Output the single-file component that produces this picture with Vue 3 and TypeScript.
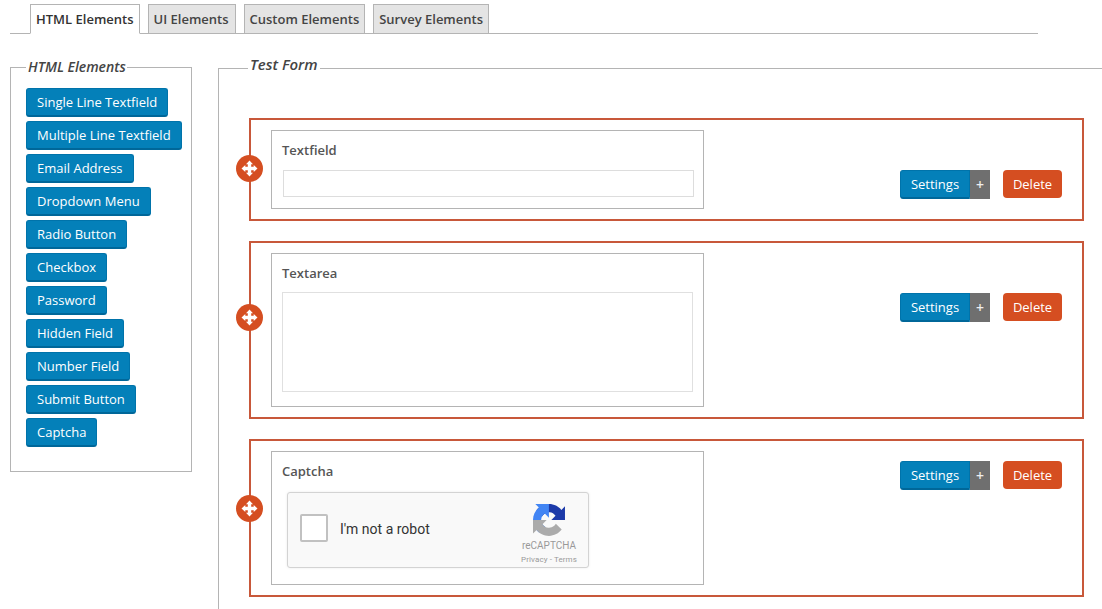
<template>
  <div class="page">
    <div class="tabs">
      <button
        v-for="(tab, i) in tabs"
        :key="tab"
        class="tab"
        :class="{ active: i === 0 }"
      >{{ tab }}</button>
    </div>

    <div class="columns">
      <fieldset class="palette">
        <legend>HTML Elements</legend>
        <button v-for="el in elements" :key="el" class="btn-blue palette-btn">{{ el }}</button>
      </fieldset>

      <fieldset class="form">
        <legend>Test Form</legend>
        <div v-for="row in rows" :key="row.label" class="row">
          <span class="handle" :style="{ top: row.handleTop + 'px' }">
            <svg width="17" height="17" viewBox="0 0 17 17" fill="#fff">
              <path d="M8.5 0.5 L12 4.3 H10.2 V6.8 H12.7 V5 L16.5 8.5 L12.7 12 V10.2 H10.2 V12.7 H12 L8.5 16.5 L5 12.7 H6.8 V10.2 H4.3 V12 L0.5 8.5 L4.3 5 V6.8 H6.8 V4.3 H5 Z" />
            </svg>
          </span>

          <div class="field">
            <label class="field-label">{{ row.label }}</label>
            <input v-if="row.kind === 'text'" class="text-input" type="text" />
            <textarea v-else-if="row.kind === 'area'" class="text-area"></textarea>
            <div v-else class="captcha">
              <span class="captcha-box"></span>
              <span class="captcha-text">I'm not a robot</span>
              <div class="captcha-brand">
                <svg width="32" height="32" viewBox="0 0 64 64">
                  <path d="M64 31.955l-.033-1.37V4.687l-7.16 7.16C50.948 4.674 42.033.093 32.05.093c-10.4 0-19.622 4.96-25.458 12.64l11.736 11.86a15.55 15.55 0 0 1 4.754-5.334c2.05-1.6 4.952-2.906 8.968-2.906.485 0 .86.057 1.135.163 4.976.393 9.288 3.14 11.828 7.124l-8.307 8.307 32.294.01" fill="#1c3aa9" />
                  <path d="M31.862 0l-1.37.033H4.594l7.16 7.16C4.58 13.052 0 21.967 0 31.95c0 10.4 4.96 19.622 12.64 25.458l11.86-11.736a15.55 15.55 0 0 1-5.334-4.754c-1.6-2.05-2.906-4.952-2.906-8.968 0-.485.057-.86.163-1.135.393-4.976 3.14-9.288 7.124-11.828l8.307 8.307L31.862 0" fill="#4285f4" />
                  <path d="M.001 31.955l.033 1.37v25.898l7.16-7.16c5.86 7.173 14.774 11.754 24.76 11.754 10.4 0 19.622-4.96 25.458-12.64L45.676 39.32a15.55 15.55 0 0 1-4.754 5.334c-2.05 1.6-4.952 2.906-8.968 2.906-.485 0-.86-.057-1.135-.163-4.976-.393-9.288-3.14-11.828-7.124l8.307-8.307L.001 31.955" fill="#ababab" />
                </svg>
                <span class="brand-name">reCAPTCHA</span>
                <span class="brand-links">Privacy - Terms</span>
              </div>
            </div>
          </div>

          <div class="actions" :class="{ high: row.kind === 'captcha' }">
            <button class="btn-blue settings">Settings</button>
            <button class="plus">+</button>
            <button class="delete">Delete</button>
          </div>
        </div>
      </fieldset>
    </div>
  </div>
</template>

<script setup lang="ts">
const tabs = ['HTML Elements', 'UI Elements', 'Custom Elements', 'Survey Elements']

const elements = [
  'Single Line Textfield',
  'Multiple Line Textfield',
  'Email Address',
  'Dropdown Menu',
  'Radio Button',
  'Checkbox',
  'Password',
  'Hidden Field',
  'Number Field',
  'Submit Button',
  'Captcha'
]

const rows = [
  { label: 'Textfield', kind: 'text', handleTop: 35 },
  { label: 'Textarea', kind: 'area', handleTop: 61 },
  { label: 'Captcha', kind: 'captcha', handleTop: 54 }
]
</script>

<style scoped>
.page {
  height: 609px;
  overflow: hidden;
  font-family: "Open Sans", "Liberation Sans", sans-serif;
  font-size: 13px;
  color: #444;
}

button {
  font-family: inherit;
  cursor: pointer;
}

.tabs {
  display: flex;
  align-items: flex-end;
  gap: 8px;
  width: 1028px;
  height: 34px;
  margin-left: 10px;
  padding-left: 20px;
  border-bottom: 1px solid #b4b4b4;
  box-sizing: border-box;
}

.tab {
  height: 30px;
  margin-bottom: -1px;
  padding: 0 5px;
  border: 1px solid #b4b4b4;
  background: #e4e4e4;
  font-size: 13px;
  font-weight: 600;
  color: #444;
}

.tab:nth-child(2) {
  padding-right: 6px;
}

.tab.active {
  background: #fff;
  border-bottom-color: #fff;
  color: #333;
}

.columns {
  display: flex;
  align-items: flex-start;
  gap: 26px;
  margin-left: 10px;
  margin-right: -20px;
}

fieldset {
  margin: 0;
  min-width: 0;
  border: 1px solid #b4b4b4;
  box-sizing: border-box;
}

legend {
  font-size: 14px;
  font-weight: 600;
  font-style: italic;
  color: #444;
  line-height: 19px;
}

.palette {
  flex: 0 0 182px;
  height: 415px;
  margin-top: 23px;
  padding: 10px 15px 0;
  display: flex;
  flex-direction: column;
  align-items: flex-start;
}

.palette legend {
  padding: 0 1px 2px 2px;
}

.palette-btn {
  margin-bottom: 4px;
  white-space: nowrap;
}

.btn-blue {
  height: 29px;
  padding: 0 10px;
  border: 1px solid #0073aa;
  border-bottom: 2px solid #006799;
  border-radius: 3px;
  background: #0480b9;
  color: #fff;
  font-size: 13px;
  flex: none;
}

.form {
  flex: 1;
  height: 640px;
  margin-top: 21px;
  padding: 36px 37px 0 30px;
}

.form legend {
  margin-left: -1px;
  padding: 0 2px 8px;
  font-size: 15px;
}

.row {
  position: relative;
  display: flex;
  align-items: flex-start;
  margin-bottom: 20px;
  padding: 10px 20px;
  border: 2px solid #c8583a;
}

/* sits over the row border, height differs per row */
.handle {
  position: absolute;
  left: -15px;
  width: 27px;
  height: 27px;
  border-radius: 50%;
  background: #d54e21;
  display: flex;
  align-items: center;
  justify-content: center;
}

.field {
  width: 433px;
  box-sizing: border-box;
  padding: 9px 10px 11px;
  border: 1px solid #b4b4b4;
}

.field-label {
  display: block;
  height: 20px;
  line-height: 20px;
  font-weight: 600;
  color: #555;
  margin-bottom: 10px;
}

.text-input {
  display: block;
  width: 411px;
  height: 27px;
  margin-left: 1px;
  box-sizing: border-box;
  border: 1px solid #ddd;
  background: #fff;
}

.text-area {
  display: block;
  width: 411px;
  height: 100px;
  box-sizing: border-box;
  border: 1px solid #e0e0e0;
  background: #fff;
  resize: none;
  margin-top: -1px;
  margin-bottom: 3px;
}

.captcha {
  display: flex;
  align-items: center;
  box-sizing: border-box;
  width: 302px;
  height: 76px;
  margin: 11px 0 5px 5px;
  padding-left: 12px;
  border: 1px solid #d3d3d3;
  border-radius: 3px;
  background: #f9f9f9;
  box-shadow: 0 0 3px rgba(0, 0, 0, 0.08);
  font-family: Roboto, "Liberation Sans", sans-serif;
}

.captcha-box {
  width: 24px;
  height: 24px;
  margin-bottom: 4px;
  border: 2px solid #c1c1c1;
  border-radius: 2px;
  background: #fff;
}

.captcha-text {
  margin-left: 12px;
  margin-bottom: 2px;
  font-size: 14px;
  color: #333;
}

.captcha-brand {
  margin-left: auto;
  width: 70px;
  margin-right: 4px;
  padding-top: 9px;
  display: flex;
  flex-direction: column;
  align-items: center;
  color: #999;
}

.brand-name {
  margin-top: 3px;
  font-size: 10px;
  line-height: 13px;
}

.brand-links {
  margin-top: 2px;
  font-size: 8px;
  letter-spacing: 0.1px;
  line-height: 11px;
}

.actions {
  display: flex;
  align-items: flex-start;
  margin-left: auto;
  margin-top: 40px;
}

.actions.high {
  margin-top: 10px;
}

.settings {
  width: 70px;
  height: 29px;
  border-radius: 3px 0 0 3px;
  padding: 0;
}

.plus {
  width: 20px;
  height: 29px;
  padding: 0;
  border: none;
  background: #6f6f6f;
  color: #eee;
  font-size: 14px;
  font-weight: 600;
}

.delete {
  width: 59px;
  height: 28px;
  margin-left: 13px;
  padding: 0;
  border: none;
  border-radius: 4px;
  background: #d54e21;
  color: #fff;
  font-size: 13px;
}
</style>

<style>
html,
body {
  margin: 0;
  background: #fff;
  overflow: hidden;
}
</style>
